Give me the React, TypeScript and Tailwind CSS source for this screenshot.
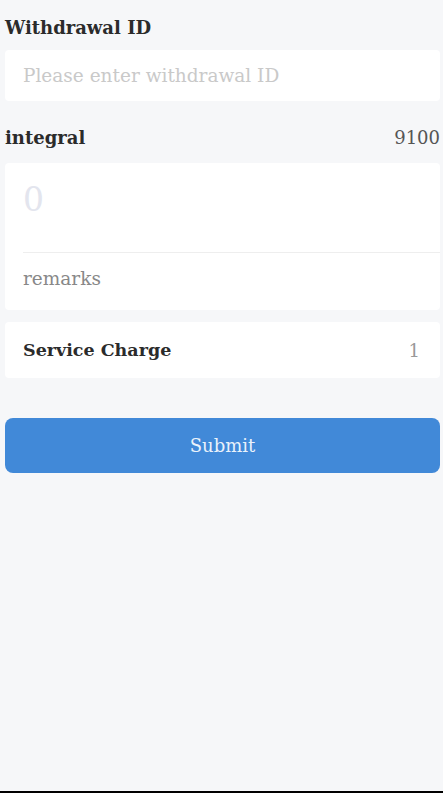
import { useState } from 'react'

export default function App() {
  const [withdrawId, setWithdrawId] = useState('')
  const [amount, setAmount] = useState('')
  const [remarks, setRemarks] = useState('')

  return (
    <div
      className="min-h-[793px] bg-[#f6f7f9] border-b-2 border-black flex flex-col"
      style={{ fontFamily: '"DejaVu Serif", "Liberation Serif", serif' }}
    >
      <div className="pl-[5px] pr-[3px]">
        {/* Withdrawal ID */}
        <div className="pt-[15px] h-[50px] text-[18px] font-bold text-[#2b2b2b] leading-[26px]">
          Withdrawal ID
        </div>
        <div className="h-[51px] bg-white rounded-[4px] flex items-center px-[18px]">
          <input
            value={withdrawId}
            onChange={(e) => setWithdrawId(e.target.value)}
            placeholder="Please enter withdrawal ID"
            className="w-full bg-transparent outline-none text-[18.5px] text-[#333] placeholder:text-[#c9c9c9]"
          />
        </div>

        {/* integral */}
        <div className="h-[62px] pt-[11px] flex items-center justify-between">
          <span className="text-[18px] font-bold text-[#2b2b2b]">integral</span>
          <span className="text-[18px] text-[#555]">9100</span>
        </div>

        <div className="bg-white rounded-[4px] pl-[18px]">
          <div className="h-[89px] pt-[17px]">
            <input
              value={amount}
              onChange={(e) => setAmount(e.target.value)}
              placeholder="0"
              className="w-full h-[40px] leading-[40px] bg-transparent outline-none text-[33px] text-[#333] placeholder:text-[#e3e5ee]"
            />
          </div>
          <div className="h-px bg-[#eeeeee]" />
          <div className="h-[57px] pt-[11px]">
            <input
              value={remarks}
              onChange={(e) => setRemarks(e.target.value)}
              placeholder="remarks"
              className="w-full h-[28px] bg-transparent outline-none text-[18.5px] text-[#333] placeholder:text-[#888]"
            />
          </div>
        </div>

        {/* Service Charge */}
        <div className="mt-[12px] h-[56px] bg-white rounded-[4px] flex items-center justify-between pl-[18px] pr-[20px]">
          <span className="text-[17.5px] font-bold text-[#2b2b2b]">Service Charge</span>
          <span className="text-[18px] text-[#999]">1</span>
        </div>

        <button className="mt-[40px] w-full h-[55px] bg-[#4189d8] rounded-[8px] text-[18px] text-[#eaf2fb]">
          Submit
        </button>
      </div>
    </div>
  )
}
